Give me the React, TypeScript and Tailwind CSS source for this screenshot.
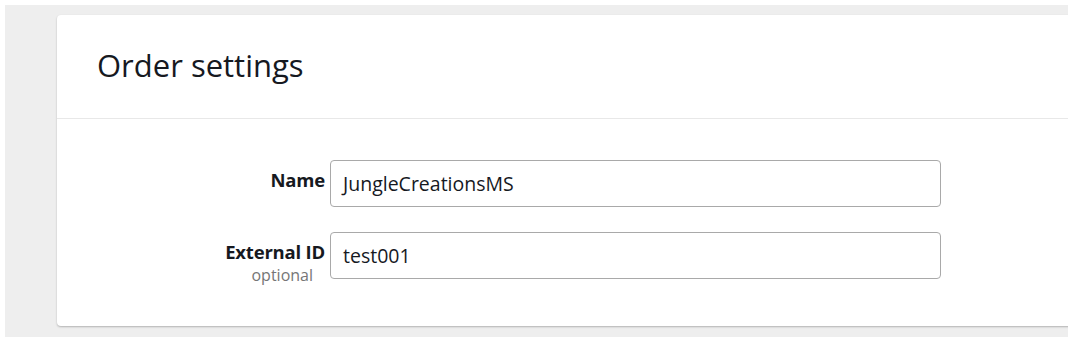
import * as React from 'react';

const font = { fontFamily: '"Open Sans", Roboto, sans-serif' };

interface FieldRowProps {
    label: string;
    hint?: string;
    value: string;
}

const FieldRow: React.FC<FieldRowProps> = ({ label, hint, value }) => {
    return (
        <div className="flex items-start">
            <div className="w-[273px] pr-[5px] flex flex-col items-end pt-[8px]">
                <span className="text-[18.5px] leading-[24px] font-bold text-[#16191f] tracking-[-0.2px]">{label}</span>
                {hint && <span className="text-[16px] leading-[22px] text-[#767676] pr-3">{hint}</span>}
            </div>
            <div className="w-[611px] h-[47px] border border-[#a9a9a9] rounded-[4px] flex items-center pl-[12px] text-[19.5px] text-[#16191f]">
                {value}
            </div>
        </div>
    );
};

export default function App() {
    return (
        <div className="w-[1080px] h-[337px] bg-white pl-[5px] pt-[5px]" style={font}>
            <div className="w-[1063px] h-[332px] bg-[#eeeeee] overflow-hidden pl-[52px] pt-[10px]">
                <div className="w-[1100px] bg-white rounded-[4px] shadow-[0_1px_2px_rgba(0,0,0,0.25)]">
                    <div className="h-[104px] border-b border-[#e8e8e8] flex items-center pl-[40px] pb-[3px]">
                        <h2 className="text-[31px] text-[#16191f] font-medium">Order settings</h2>
                    </div>
                    <div className="pt-[41px] pb-[40px] flex flex-col gap-[25px]">
                        <FieldRow label="Name" value="JungleCreationsMS" />
                        <FieldRow label="External ID" hint="optional" value="test001" />
                    </div>
                </div>
            </div>
        </div>
    );
}
